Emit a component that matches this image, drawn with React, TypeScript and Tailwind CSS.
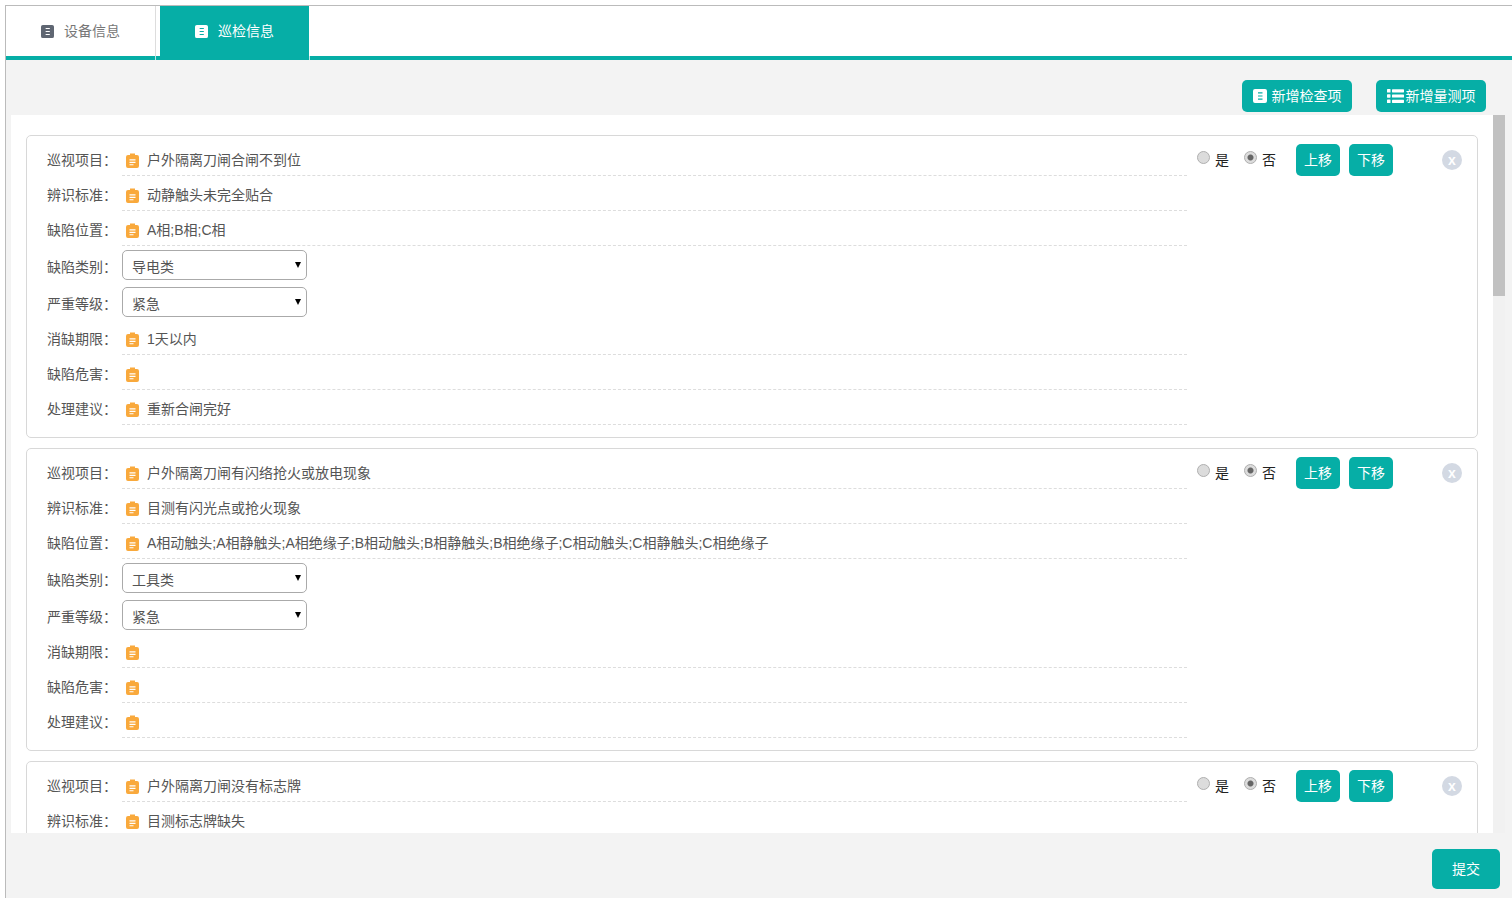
import { ReactNode } from "react";

const fontStack = "font-['Liberation_Sans','Noto_Sans_CJK_SC',sans-serif]";

interface InspectItem {
  project: string;
  standard: string;
  position: string;
  category: string;
  level: string;
  limit: string;
  harm: string;
  advice: string;
}

const items: InspectItem[] = [
  {
    project: "户外隔离刀闸合闸不到位",
    standard: "动静触头未完全贴合",
    position: "A相;B相;C相",
    category: "导电类",
    level: "紧急",
    limit: "1天以内",
    harm: "",
    advice: "重新合闸完好",
  },
  {
    project: "户外隔离刀闸有闪络抢火或放电现象",
    standard: "目测有闪光点或抢火现象",
    position:
      "A相动触头;A相静触头;A相绝缘子;B相动触头;B相静触头;B相绝缘子;C相动触头;C相静触头;C相绝缘子",
    category: "工具类",
    level: "紧急",
    limit: "",
    harm: "",
    advice: "",
  },
  {
    project: "户外隔离刀闸没有标志牌",
    standard: "目测标志牌缺失",
    position: "A相;B相;C相",
    category: "标识类",
    level: "一般",
    limit: "",
    harm: "",
    advice: "",
  },
];

function BookIcon({ className }: { className: string }) {
  return (
    <svg viewBox="0 0 14 14" className={className}>
      <path
        fill="currentColor"
        fillRule="evenodd"
        d="M2 0h10a2 2 0 0 1 2 2v10a2 2 0 0 1-2 2H2a2 2 0 0 1-2-2V2a2 2 0 0 1 2-2zM5 3.2v1.2h4.5V3.2zM5 6.4v1.2h4.5V6.4zM5 9.6v1.2h4.5V9.6z"
      />
    </svg>
  );
}

function ListIcon() {
  return (
    <svg viewBox="0 0 17 14" className="h-[14px] w-[17px] text-white">
      <g fill="currentColor">
        <rect x="0" y="0" width="3.5" height="3.5" rx="0.6" />
        <rect x="0" y="5.2" width="3.5" height="3.5" rx="0.6" />
        <rect x="0" y="10.5" width="3.5" height="3.5" rx="0.6" />
        <rect x="5" y="0.2" width="12" height="3.2" rx="0.6" />
        <rect x="5" y="5.4" width="12" height="3.2" rx="0.6" />
        <rect x="5" y="10.7" width="12" height="3.2" rx="0.6" />
      </g>
    </svg>
  );
}

function ClipboardIcon() {
  return (
    <svg viewBox="0 0 13 15" className="h-[15px] w-[13px] shrink-0 text-[#f9a93c]">
      <path
        fill="currentColor"
        fillRule="evenodd"
        d="M4 0.5h5v1.5h2a2 2 0 0 1 2 2v9a2 2 0 0 1-2 2H2a2 2 0 0 1-2-2V4a2 2 0 0 1 2-2h2zM3.5 6.2v1.2h6V6.2zM3.5 8.8V10h6V8.8zM3.5 11.3v1h4v-1z"
      />
    </svg>
  );
}

function TextRow({ label, value }: { label: string; value: string }) {
  return (
    <div className="flex h-[35px] items-start">
      <div className="w-[95px] shrink-0 pt-[9px] pl-[20px] text-[14px] leading-5 whitespace-nowrap text-[#555]">
        {label}：
      </div>
      <div className="flex h-[35px] w-[1065px] items-center gap-[8px] border-b border-dashed border-[#ddd] pt-[4px] pl-[4px] text-[14px] text-[#555]">
        <ClipboardIcon />
        <span className="whitespace-nowrap">{value}</span>
      </div>
    </div>
  );
}

function SelectRow({ label, value }: { label: string; value: string }) {
  return (
    <div className="flex h-[37px] items-start pt-[4px]">
      <div className="w-[95px] shrink-0 pt-[7px] pl-[20px] text-[14px] leading-5 whitespace-nowrap text-[#555]">
        {label}：
      </div>
      <div className="relative h-[30px] w-[185px]">
        <select
          defaultValue={value}
          className="h-[30px] w-full appearance-none rounded-[5px] border border-[#aaa] bg-white pt-[5px] pl-[9px] text-[14px] text-[#555] outline-none"
        >
          <option>{value}</option>
        </select>
        <span className="pointer-events-none absolute top-[12px] right-[6px] h-0 w-0 border-x-[3px] border-t-[6px] border-x-transparent border-t-black" />
      </div>
    </div>
  );
}

function Radio({ label, checked }: { label: string; checked?: boolean }) {
  return (
    <label className="flex items-center gap-[5px] text-[14px] text-[#222]">
      <input
        type="radio"
        defaultChecked={checked}
        className="h-[13px] w-[13px] -translate-y-[3px] appearance-none rounded-full border border-[#b0b0b0] bg-[#dcdcdc] checked:bg-[radial-gradient(circle,#666_0,#666_2.5px,#dcdcdc_3.5px)]"
      />
      {label}
    </label>
  );
}

function TealButton({ children, className }: { children: ReactNode; className: string }) {
  return (
    <button
      className={`flex items-center justify-center rounded-[5px] bg-[#06aea6] text-[14px] text-white ${className}`}
    >
      {children}
    </button>
  );
}

function ItemCard({ item }: { item: InspectItem }) {
  return (
    <div className="mb-[10px] flex h-[303px] shrink-0 rounded-[5px] border border-[#d8d8d8] bg-white pt-[5px]">
      <div className="w-[1160px] shrink-0">
        <TextRow label="巡视项目" value={item.project} />
        <TextRow label="辨识标准" value={item.standard} />
        <TextRow label="缺陷位置" value={item.position} />
        <SelectRow label="缺陷类别" value={item.category} />
        <SelectRow label="严重等级" value={item.level} />
        <TextRow label="消缺期限" value={item.limit} />
        <TextRow label="缺陷危害" value={item.harm} />
        <TextRow label="处理建议" value={item.advice} />
      </div>
      <div className="flex h-[40px] flex-1 items-start pt-[3px]">
        <div className="ml-[10px] flex h-[32px] items-center gap-[15px]">
          <Radio label="是" />
          <Radio label="否" checked />
        </div>
        <TealButton className="ml-[20px] h-[32px] w-[44px]">上移</TealButton>
        <TealButton className="ml-[9px] h-[32px] w-[44px]">下移</TealButton>
        <div className="mt-[6px] ml-[49px] flex h-[20px] w-[20px] items-center justify-center rounded-full bg-[#d3d9e3] text-[14px] font-bold text-white">
          x
        </div>
      </div>
    </div>
  );
}

export default function App() {
  return (
    <div className={`h-[898px] w-[1512px] overflow-hidden bg-white pt-[5px] pl-[5px] ${fontStack}`}>
      <div className="flex h-[893px] flex-col border-t border-l border-[#bbb]">
        <div className="flex h-[54px] shrink-0 items-stretch border-b-[4px] border-[#06aea6]">
          <div className="relative flex w-[150px] items-center justify-center gap-[10px] border-r border-[#ddd] text-[14px] text-[#777]">
            <BookIcon className="h-[13px] w-[13px] text-[#5f6672]" />
            设备信息
            <span className="absolute right-[-1px] bottom-[-4px] h-[4px] w-px bg-[#bfe9e6]" />
          </div>
          <div className="relative ml-[4px] flex w-[149px] items-center justify-center gap-[10px] bg-[#06aea6] text-[14px] text-white">
            <BookIcon className="h-[13px] w-[13px] text-white" />
            巡检信息
            <span className="absolute right-[-1px] bottom-[-4px] h-[4px] w-px bg-[#bfe9e6]" />
          </div>
        </div>
        <div className="flex flex-1 flex-col bg-[#f3f3f3]">
          <div className="flex h-[55px] shrink-0 items-end justify-end gap-[24px] pr-[26px] pb-[3px]">
            <TealButton className="h-[32px] w-[110px] gap-[5px]">
              <BookIcon className="h-[14px] w-[14px] text-white" />
              新增检查项
            </TealButton>
            <TealButton className="h-[32px] w-[110px] gap-[2px]">
              <ListIcon />
              新增量测项
            </TealButton>
          </div>
          <div className="ml-[5px] flex h-[718px] w-[1494px] shrink-0">
            <div className="flex w-[1482px] flex-col overflow-hidden bg-white px-[15px] pt-[20px]">
              {items.map((item) => (
                <ItemCard key={item.project} item={item} />
              ))}
            </div>
            <div className="h-full w-[12px] bg-[#f1f1f1]">
              <div className="h-[181px] w-full bg-[#c1c1c1]" />
            </div>
          </div>
          <div className="flex flex-1 items-start justify-end pt-[16px] pr-[12px]">
            <TealButton className="h-[40px] w-[68px]">提交</TealButton>
          </div>
        </div>
      </div>
    </div>
  );
}
